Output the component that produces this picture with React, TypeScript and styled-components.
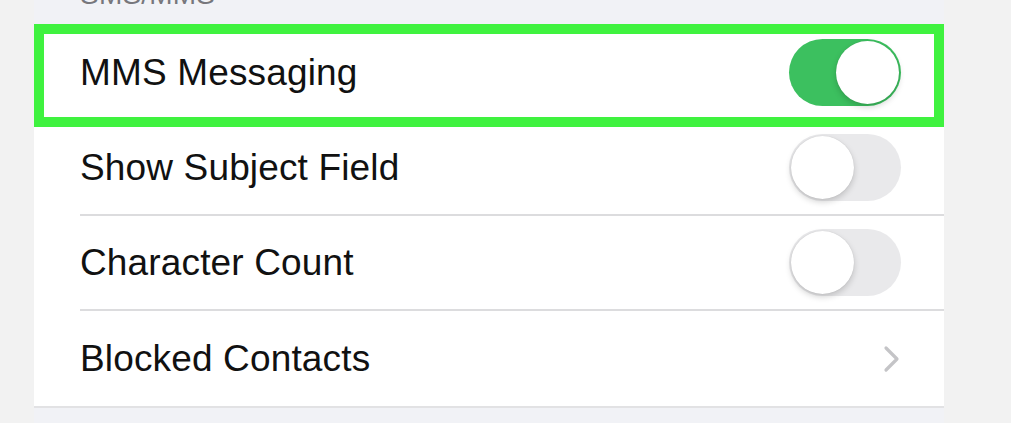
import React from "react";
import styled, { createGlobalStyle } from "styled-components";

const Global = createGlobalStyle`
  html, body { margin: 0; padding: 0; background: #f2f2f2; }
  body { font-family: "Liberation Sans", Arial, sans-serif; overflow: hidden; }
`;

const Page = styled.div`
  display: flex;
  width: 1011px;
  height: 423px;
  background: #f2f2f2;
`;

const Side = styled.div<{ $w: number }>`
  width: ${(p) => p.$w}px;
  flex: none;
  background: #f2f2f2;
`;

const Phone = styled.div`
  position: relative;
  width: 910px;
  flex: none;
  display: flex;
  flex-direction: column;
  background: #f1f2f6;
`;

const Header = styled.div`
  height: 26px;
  padding-left: 46px;
  display: flex;
  align-items: flex-start;
`;

const HeaderLabel = styled.span`
  margin-top: -19px;
  font-size: 28px;
  line-height: 28px;
  color: #77777c;
  letter-spacing: 0.2px;
`;

const List = styled.div`
  background: #fff;
  display: flex;
  flex-direction: column;
  border-bottom: 2px solid #e2e2e4;
`;

const Row = styled.div<{ $last?: boolean }>`
  height: 95px;
  box-sizing: border-box;
  margin-left: 46px;
  padding-right: 43px;
  display: flex;
  align-items: center;
  justify-content: space-between;
  border-bottom: ${(p) => (p.$last ? "none" : "2px solid #dcdcde")};
`;

const Label = styled.span`
  font-size: 37px;
  color: #111;
  letter-spacing: 0.15px;
`;

const Track = styled.div<{ $on: boolean }>`
  position: relative;
  width: 112px;
  height: 67px;
  border-radius: 34px;
  background: ${(p) => (p.$on ? "#3cc05f" : "#e9e9eb")};
  flex: none;
`;

const Knob = styled.div<{ $on: boolean }>`
  position: absolute;
  top: 2px;
  left: ${(p) => (p.$on ? "47px" : "2px")};
  width: 63px;
  height: 63px;
  border-radius: 50%;
  background: #fff;
  box-shadow: 0 3px 6px rgba(0, 0, 0, 0.18), 0 0 1px rgba(0, 0, 0, 0.15);
`;

const Highlight = styled.div`
  position: absolute;
  left: 0;
  top: 24px;
  width: 910px;
  height: 103px;
  box-sizing: border-box;
  border: 10px solid #3ff23f;
  pointer-events: none;
`;

const Toggle = ({ on }: { on: boolean }) => (
  <Track $on={on}>
    <Knob $on={on} />
  </Track>
);

const Chevron = () => (
  <svg width="18" height="28" viewBox="0 0 18 28">
    <path d="M3 3 L14 14 L3 25" fill="none" stroke="#c4c4c7" strokeWidth="3.2" strokeLinecap="round" strokeLinejoin="round" />
  </svg>
);

export default function App() {
  return (
    <>
      <Global />
      <Page>
        <Side $w={34} />
        <Phone>
          <Header>
            <HeaderLabel>SMS/MMS</HeaderLabel>
          </Header>
          <List>
            <Row>
              <Label>MMS Messaging</Label>
              <Toggle on />
            </Row>
            <Row>
              <Label>Show Subject Field</Label>
              <Toggle on={false} />
            </Row>
            <Row>
              <Label>Character Count</Label>
              <Toggle on={false} />
            </Row>
            <Row $last>
              <Label>Blocked Contacts</Label>
              <Chevron />
            </Row>
          </List>
          <Highlight />
        </Phone>
        <Side $w={67} />
      </Page>
    </>
  );
}
